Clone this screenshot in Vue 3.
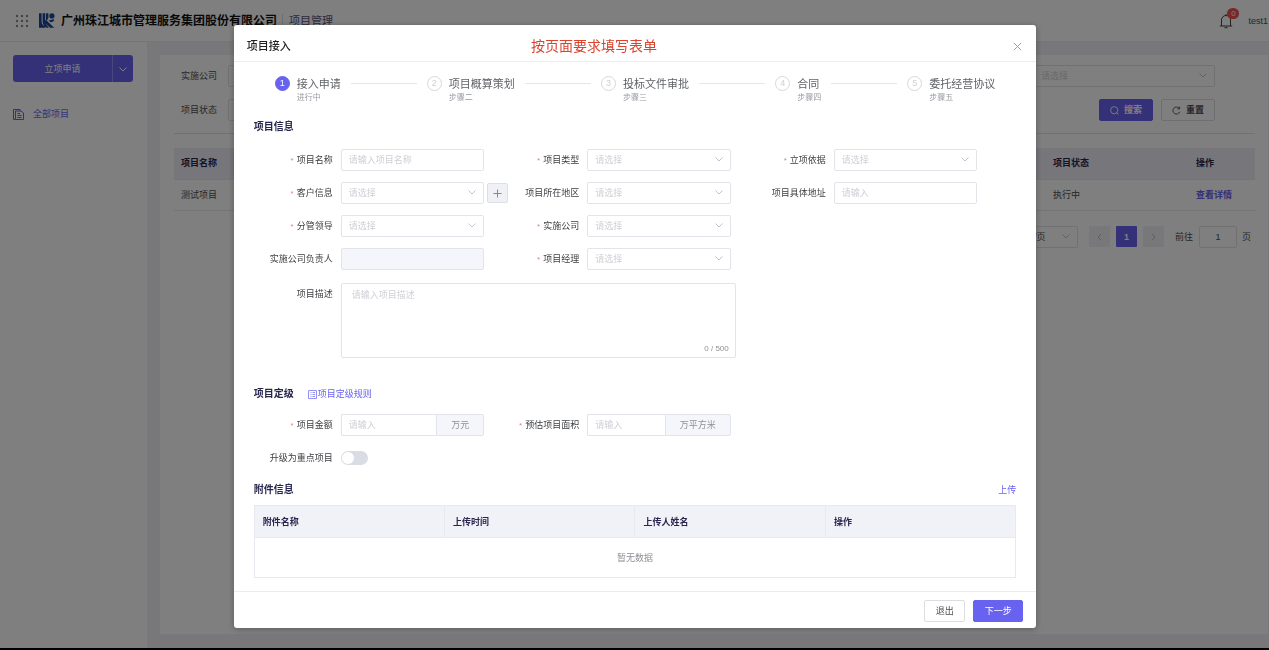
<script setup>
import { ref } from 'vue'

const steps = [
  { title: '接入申请', note: '进行中' },
  { title: '项目概算策划', note: '步骤二' },
  { title: '投标文件审批', note: '步骤三' },
  { title: '合同', note: '步骤四' },
  { title: '委托经营协议', note: '步骤五' },
]

const fields = [
  { id: 'name', label: '项目名称', required: true, type: 'input', hint: '请输入项目名称' },
  { id: 'type', label: '项目类型', required: true, type: 'select', hint: '请选择' },
  { id: 'basis', label: '立项依据', required: true, type: 'select', hint: '请选择' },
  { id: 'client', label: '客户信息', required: true, type: 'select', hint: '请选择', add: true },
  { id: 'region', label: '项目所在地区', type: 'select', hint: '请选择' },
  { id: 'address', label: '项目具体地址', type: 'input', hint: '请输入' },
  { id: 'leader', label: '分管领导', required: true, type: 'select', hint: '请选择' },
  { id: 'company', label: '实施公司', required: true, type: 'select', hint: '请选择' },
  { id: 'owner', label: '实施公司负责人', type: 'input', hint: '', disabled: true, newRow: true },
  { id: 'manager', label: '项目经理', required: true, type: 'select', hint: '请选择' },
]

const columns = ['附件名称', '上传时间', '上传人姓名', '操作']
const description = ref('')
const keyProject = ref(false)
</script>

<template>
  <div class="page">
    <header class="topbar">
      <svg class="dots" viewBox="0 0 14 14" aria-hidden="true">
        <g v-for="r in 3" :key="r">
          <circle v-for="c in 3" :key="c" :cx="c * 5 - 3" :cy="r * 5 - 3" r="1.2" />
        </g>
      </svg>
      <svg class="logo" viewBox="0 0 16 15" aria-hidden="true">
        <path d="M0 .3h2.600v8.200c0 2.500 1.300 4 3.600 4.600v1.600H0z" />
        <path d="M3.600.3h2.600v7.400l.8-.6V.3h2.400v4.500L7.800 7.700l7.400 7h-4.100L6.400 10.200l3.400 4.500H7.300C4.800 12.800 3.600 11 3.600 8.500z" />
        <path d="M9.400 6.900c1.200.5 3.400.2 4.800-.6l1.200.7c-1 1.500-2.300 2.100-3.900 2.300z" />
        <circle cx="12.900" cy="2.900" r="2.600" />
      </svg>
      <strong class="brand">广州珠江城市管理服务集团股份有限公司</strong>
      <span class="module">项目管理</span>
      <button class="bell" type="button" aria-label="通知">
        <svg viewBox="0 0 14 16" aria-hidden="true">
          <path d="M.8 13h12.400M2.500 13V7a4.500 4.500 0 0 1 9 0v6M7 2.500V1M5.500 14.700h3" />
        </svg>
        <span class="badge">0</span>
      </button>
      <span class="user">test1</span>
    </header>

    <div class="columns">
      <nav class="sidebar">
        <div class="split">
          <button type="button" class="split-main">立项申请</button>
          <button type="button" class="split-more" aria-label="更多">
            <svg class="chev" viewBox="0 0 8 5" aria-hidden="true"><path d="M.5.5 4 4 7.500.5" /></svg>
          </button>
        </div>
        <a href="#" class="menu-item">
          <svg viewBox="0 0 11 11" aria-hidden="true">
            <path d="M2.500 10.500h-2v-10h6.500v1.500M2.500 2h5.500l2.500 2v6.500h-8zM4.500 4.500h2.500M4.500 6.500h4M4.500 8.500h4" />
          </svg>
          全部项目
        </a>
      </nav>

      <main class="content">
        <div class="card">
          <div class="filter">
            <label for="f-company">实施公司</label>
            <input id="f-company" class="control filter-first" />
            <div class="select filter-last">
              <select class="control" aria-label="请选择"><option>请选择</option></select>
              <svg class="chev" viewBox="0 0 8 5" aria-hidden="true"><path d="M.5.5 4 4 7.500.5" /></svg>
            </div>
          </div>
          <div class="filter">
            <label for="f-status">项目状态</label>
            <input id="f-status" class="control filter-first" />
            <div class="filter-actions">
              <button type="button" class="btn primary">
                <svg viewBox="0 0 10 10" aria-hidden="true"><circle cx="4.700" cy="4.700" r="4" /><path d="m7.600 7.600 1.800 1.800" /></svg>
                搜索
              </button>
              <button type="button" class="btn">
                <svg viewBox="0 0 10 10" aria-hidden="true"><path d="M8.600 6.400A3.900 3.900 0 1 1 8 2.600M8.500.7v2.500H6" /></svg>
                重置
              </button>
            </div>
          </div>

          <div class="results">
            <table class="list">
              <thead>
                <tr><th>项目名称</th><th class="col-status">项目状态</th><th class="col-action">操作</th></tr>
              </thead>
              <tbody>
                <tr><td>测试项目</td><td>执行中</td><td><a href="#">查看详情</a></td></tr>
              </tbody>
            </table>
          </div>

          <div class="pager">
            <div class="select pager-size">
              <select class="control" aria-label="每页条数"><option>10条/页</option></select>
              <svg class="chev" viewBox="0 0 8 5" aria-hidden="true"><path d="M.5.5 4 4 7.500.5" /></svg>
            </div>
            <button type="button" class="page-btn" aria-label="上一页">
              <svg viewBox="0 0 5 8" aria-hidden="true"><path d="M4 1 1 4l3 3" /></svg>
            </button>
            <button type="button" class="page-btn current">1</button>
            <button type="button" class="page-btn" aria-label="下一页">
              <svg viewBox="0 0 5 8" aria-hidden="true"><path d="m1 1 3 3-3 3" /></svg>
            </button>
            <label for="jump" class="jump-label">前往</label>
            <input id="jump" class="control jump" value="1" />
            <span>页</span>
          </div>
        </div>
      </main>
    </div>
  </div>

  <div class="overlay">
    <section class="modal" role="dialog" aria-labelledby="dialog-title">
      <header class="modal-head">
        <h2 id="dialog-title">项目接入</h2>
        <p class="notice">按页面要求填写表单</p>
        <button type="button" class="close" aria-label="关闭">
          <svg viewBox="0 0 10 10" aria-hidden="true"><path d="m1 1 8 8M9 1 1 9" /></svg>
        </button>
      </header>

      <div class="modal-body">
        <ol class="steps">
          <template v-for="(s, i) in steps" :key="s.title">
            <li v-if="i" class="line" aria-hidden="true"></li>
            <li class="step" :class="{ active: i === 0 }">
              <span class="num">{{ i + 1 }}</span>
              <div>
                <div class="step-title">{{ s.title }}</div>
                <div class="step-note">{{ s.note }}</div>
              </div>
            </li>
          </template>
        </ol>

        <h3>项目信息</h3>
        <div class="form">
          <div v-for="f in fields" :key="f.id" class="field" :class="{ 'new-row': f.newRow }">
            <label :for="f.id"><i v-if="f.required">*</i>{{ f.label }}</label>
            <div class="value">
              <input v-if="f.type === 'input'" :id="f.id" class="control" :placeholder="f.hint" :disabled="f.disabled" />
              <div v-else class="select">
                <select :id="f.id" class="control"><option>{{ f.hint }}</option></select>
                <svg class="chev" viewBox="0 0 8 5" aria-hidden="true"><path d="M.5.5 4 4 7.500.5" /></svg>
              </div>
              <button v-if="f.add" type="button" class="add" aria-label="新增客户">
                <svg viewBox="0 0 9 9" aria-hidden="true"><path d="M4.500.5v8M.5 4.500h8" /></svg>
              </button>
            </div>
          </div>
        </div>
        <div class="form describe">
          <div class="field wide">
            <label for="desc">项目描述</label>
            <div class="value area">
              <textarea id="desc" v-model="description" class="control" maxlength="500" placeholder="请输入项目描述"></textarea>
              <span class="count">{{ description.length }} / 500</span>
            </div>
          </div>
        </div>

        <div class="heading rating">
          <h3>项目定级</h3>
          <a href="#">
            <svg viewBox="0 0 9 9" aria-hidden="true"><path d="M.5.5h8v8h-8zM2.500 2.500h1M4.500 2.500h2.500M2.500 4.500h1M4.500 4.500h2.500M2.500 6.500h1M4.500 6.500h2.500" /></svg>项目定级规则
          </a>
        </div>
        <div class="form">
          <div class="field">
            <label for="amount"><i>*</i>项目金额</label>
            <div class="value group">
              <input id="amount" class="control" placeholder="请输入" />
              <span class="unit">万元</span>
            </div>
          </div>
          <div class="field">
            <label for="acreage"><i>*</i>预估项目面积</label>
            <div class="value group">
              <input id="acreage" class="control" placeholder="请输入" />
              <span class="unit">万平方米</span>
            </div>
          </div>
          <div class="field new-row">
            <label for="key">升级为重点项目</label>
            <div class="value"><input id="key" v-model="keyProject" type="checkbox" class="switch" /></div>
          </div>
        </div>

        <div class="heading files">
          <h3>附件信息</h3>
          <a href="#">上传</a>
        </div>
        <table class="attachments">
          <thead><tr><th v-for="c in columns" :key="c">{{ c }}</th></tr></thead>
          <tbody><tr><td colspan="4">暂无数据</td></tr></tbody>
        </table>
      </div>

      <footer class="modal-foot">
        <button type="button" class="btn">退出</button>
        <button type="button" class="btn primary next">下一步</button>
      </footer>
    </section>
  </div>
</template>

<style>
body {
  background: #fff;
}
</style>

<style scoped>
.page,
.overlay {
  --primary: #6862f0;
  --line: #e3e3ea;
  --ink: #27264d;
  font-family: "Liberation Sans", "Noto Sans CJK SC", sans-serif;
  font-size: 9px;
  line-height: 14px;
  color: #4c4d50;
}
.page *,
.overlay,
.overlay * {
  box-sizing: border-box;
}
button,
input,
select,
textarea {
  font: inherit;
  color: inherit;
  margin: 0;
}
button {
  cursor: pointer;
}
svg {
  fill: none;
  stroke: currentColor;
  flex: none;
}
a {
  color: var(--primary);
  text-decoration: none;
}
h2,
h3,
p,
ol {
  margin: 0;
  padding: 0;
}
.page {
  box-sizing: border-box;
  min-height: 100vh;
  display: flex;
  flex-direction: column;
  border-bottom: 2px solid #000;
  background: #f1f1f6;
}

/* Top bar */
.topbar {
  display: flex;
  align-items: center;
  height: 42px;
  padding: 0 1px 0 15px;
  background: #fff;
  border-bottom: 1px solid #ebebef;
}
.dots {
  width: 14px;
  height: 14px;
  fill: #888;
  stroke: none;
}
.logo {
  width: 16px;
  height: 15px;
  margin-left: 10px;
  fill: #1c4694;
  stroke: none;
}
.brand {
  margin-left: 6px;
  font-size: 12px;
  color: #111;
  white-space: nowrap;
}
.module {
  margin-left: 5px;
  padding-left: 6px;
  font-size: 11px;
  color: #55557a;
  border-left: 1px solid #ddd;
}
.bell {
  position: relative;
  margin-left: auto;
  padding: 0;
  height: 16px;
  border: 0;
  background: none;
  color: #444;
}
.bell svg {
  width: 14px;
  height: 16px;
}
.badge {
  position: absolute;
  left: 8px;
  top: -5px;
  width: 12px;
  height: 11px;
  border-radius: 6px;
  background: #f05050;
  color: #fff;
  font-size: 8px;
  line-height: 11px;
}
.user {
  margin-left: 15px;
}

/* Side bar */
.columns {
  flex: 1;
  display: flex;
}
.sidebar {
  width: 147px;
  padding: 13px 14px 0 13px;
  background: #fff;
}
.split {
  display: flex;
  height: 27px;
  border-radius: 3px;
  background: var(--primary);
  color: #fff;
}
.split button {
  border: 0;
  padding: 0;
  background: none;
}
.split .split-main {
  flex: 1;
}
.split .split-more {
  width: 21px;
  border-left: 1px solid #918cf5;
}
.chev {
  width: 8px;
  height: 5px;
}
.menu-item {
  display: flex;
  align-items: center;
  gap: 9px;
  margin-top: 25px;
}
.menu-item svg {
  width: 11px;
  height: 11px;
}

/* Project list */
.content {
  flex: 1;
  display: flex;
  padding: 13px 1px 14px 13px;
}
.card {
  flex: 1;
  padding: 10px 13px 0 14px;
  background: #fff;
}
.filter {
  display: flex;
  align-items: center;
  height: 22px;
  margin: 0 40px 12px 7px;
}
.filter label {
  width: 47px;
}
.control {
  display: block;
  width: 100%;
  height: 22px;
  padding: 0 7px;
  border: 1px solid var(--line);
  border-radius: 2px;
  background: #fff;
  outline: 0;
}
.filter-first {
  width: 182px;
}
.filter-last {
  width: 182px;
  margin-left: auto;
}
.filter-actions {
  display: flex;
  gap: 8px;
  margin-left: auto;
}
.select {
  position: relative;
  flex: 1;
}
.filter .select,
.pager .select {
  flex: none;
}
select.control {
  appearance: none;
  color: #cfcfd6;
}
.select .chev {
  position: absolute;
  right: 8px;
  top: 8px;
  color: #c0c2cc;
  pointer-events: none;
}
.control::placeholder {
  color: #cfcfd6;
  opacity: 1;
}
.btn {
  display: flex;
  align-items: center;
  justify-content: center;
  gap: 5px;
  width: 41px;
  height: 22px;
  padding: 0;
  border: 1px solid #dcdce2;
  border-radius: 2px;
  background: #fff;
  white-space: nowrap;
}
.btn svg {
  width: 9px;
  height: 9px;
}
.btn.primary {
  border-color: var(--primary);
  background: var(--primary);
  color: #fff;
}
.filter-actions .btn {
  width: 54px;
  font-weight: bold;
}
.results {
  padding-top: 14px;
  border-top: 1px solid var(--line);
}
.list {
  width: 100%;
  border-collapse: collapse;
  table-layout: fixed;
}
.list th,
.list td {
  height: 31px;
  padding: 0 8px 0 7px;
  text-align: left;
  white-space: nowrap;
  border-bottom: 1px solid #e9e9f0;
}
.list th {
  background: #ececf6;
  color: var(--ink);
}
.list td a {
  font-weight: bold;
}
.col-status {
  width: 143px;
}
.col-action {
  width: 66px;
}
.pager {
  display: flex;
  align-items: center;
  justify-content: flex-end;
  margin-top: 15px;
  padding-right: 4px;
}
.pager-size {
  width: 71px;
  margin-right: 11px;
}
.pager-size select.control {
  color: inherit;
}
.page-btn {
  display: grid;
  place-items: center;
  width: 21px;
  height: 21px;
  padding: 0;
  margin-right: 6px;
  border: 0;
  border-radius: 1px;
  background: #f1f1f6;
  color: #b8bac4;
}
.page-btn svg {
  width: 5px;
  height: 8px;
}
.page-btn.current {
  background: var(--primary);
  color: #fff;
  font-weight: bold;
}
.jump-label {
  margin: 0 6px 0 5px;
}
.jump {
  width: 38px;
  margin-right: 5px;
  text-align: center;
}

/* Dialog */
.overlay {
  position: fixed;
  inset: 0;
  display: flex;
  align-items: flex-start;
  justify-content: center;
  padding: 25px 0 0 1px;
  background: rgba(0, 0, 0, 0.5);
}
.modal {
  width: 63.3%;
  border-radius: 3px;
  background: #fff;
  box-shadow: 0 1px 6px rgba(0, 0, 0, 0.3);
}
.modal-head {
  display: flex;
  align-items: center;
  height: 37px;
  padding: 6px 14px 0 13px;
  border-bottom: 1px solid #ececf0;
}
.modal-head h2 {
  font-size: 11px;
  font-weight: 500;
  color: #222;
}
.notice {
  margin-left: 31%;
  font-size: 14px;
  color: #d9442f;
}
.close {
  margin-left: auto;
  padding: 0;
  height: 14px;
  border: 0;
  background: none;
  color: #999;
}
.close svg {
  display: block;
  width: 9px;
  height: 9px;
}
.modal-body {
  padding: 14px 20px 13px;
}
.steps {
  display: flex;
  gap: 10px;
  padding: 0 21px;
  list-style: none;
}
.line {
  flex: 1;
  height: 8px;
  border-bottom: 1px solid #e6e6ea;
}
.step {
  display: flex;
  gap: 7px;
}
.num {
  width: 15px;
  height: 15px;
  border: 1px solid #d8d8dd;
  border-radius: 50%;
  line-height: 13px;
  text-align: center;
  color: #cfcfd6;
}
.active .num {
  border-color: var(--primary);
  background: var(--primary);
  color: #fff;
}
.step-title {
  font-size: 11px;
  line-height: 16px;
  white-space: nowrap;
  color: #606266;
}
.step-note {
  margin-top: 1px;
  font-size: 8px;
  line-height: 10px;
  color: #999ba2;
}
h3 {
  font-size: 10px;
  line-height: 16px;
  font-weight: bold;
  color: var(--ink);
}
.steps + h3 {
  margin: 16px 0 14px;
}
.form {
  display: grid;
  grid-template-columns: repeat(3, 1fr);
  row-gap: 11px;
  padding-right: 23px;
}
.field {
  display: flex;
  gap: 8px;
  padding-right: 16px;
  min-width: 0;
}
.new-row {
  grid-column-start: 1;
}
.field label {
  width: 79px;
  height: 22px;
  flex: none;
  line-height: 22px;
  text-align: right;
  color: #3f4044;
  white-space: nowrap;
}
.field i {
  margin-right: 3px;
  font-style: normal;
  font-size: 8px;
  line-height: 1;
  color: #e08585;
}
.value {
  flex: 1;
  display: flex;
  align-items: center;
  min-width: 0;
}
.control:disabled {
  background: #f5f6fb;
}
.add {
  display: grid;
  place-items: center;
  flex: none;
  width: 21px;
  height: 20px;
  margin: 0 -24px 0 3px;
  padding: 0;
  border: 1px solid #dedfe6;
  border-radius: 2px;
  background: #f0f1f6;
  color: #85878f;
}
.add svg {
  width: 9px;
  height: 9px;
}
.describe {
  margin-top: 13px;
}
.wide {
  grid-column: span 2;
  padding-right: 11px;
}
.area {
  position: relative;
}
.area .control {
  height: 75px;
  padding: 4px 10px;
  resize: none;
}
.count {
  position: absolute;
  right: 7px;
  bottom: 2px;
  font-size: 8px;
  color: #8e9096;
}
.heading {
  display: flex;
  align-items: center;
}
.rating {
  margin: 28px 0 12px;
  gap: 14px;
}
.rating a {
  display: flex;
  align-items: center;
  gap: 1px;
}
.rating svg {
  width: 9px;
  height: 9px;
  opacity: 0.7;
}
.group .control {
  flex: 1;
  width: 0;
  border-right: 0;
  border-radius: 2px 0 0 2px;
}
.unit {
  height: 22px;
  padding: 0 14px;
  line-height: 20px;
  border: 1px solid var(--line);
  border-radius: 0 2px 2px 0;
  background: #f5f6fb;
  color: #8e9096;
}
.switch {
  appearance: none;
  display: flex;
  width: 27px;
  height: 14px;
  padding: 1px;
  border-radius: 7px;
  background: #dadce4;
}
.switch::before {
  content: "";
  width: 12px;
  height: 12px;
  border-radius: 50%;
  background: #fff;
}
.switch:checked {
  justify-content: flex-end;
  background: var(--primary);
}
.files {
  justify-content: space-between;
  margin: 13px 0 7px;
}
.attachments {
  width: 100%;
  border-collapse: collapse;
  table-layout: fixed;
}
.attachments th,
.attachments td {
  border: 1px solid #e8e9f0;
  padding: 0 8px;
}
.attachments th {
  height: 32px;
  text-align: left;
  background: #f1f2f8;
  color: var(--ink);
}
.attachments td {
  height: 40px;
  text-align: center;
  color: #8e9096;
}
.modal-foot {
  display: flex;
  justify-content: flex-end;
  gap: 8px;
  padding: 8px 13px 6px;
  border-top: 1px solid #ececf0;
}
.modal-foot .next {
  width: 50px;
}
</style>
